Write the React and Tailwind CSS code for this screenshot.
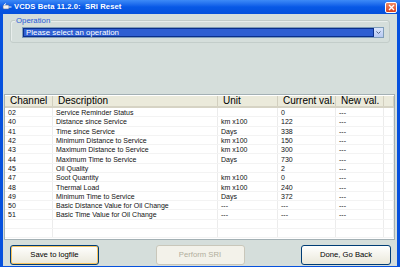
import React from "react";

const rows = [
  ["02", "Service Reminder Status", "", "0", "---"],
  ["40", "Distance since Service", "km x100", "122", "---"],
  ["41", "Time since Service", "Days", "338", "---"],
  ["42", "Minimum Distance to Service", "km x100", "150", "---"],
  ["43", "Maximum Distance to Service", "km x100", "300", "---"],
  ["44", "Maximum Time to Service", "Days", "730", "---"],
  ["45", "Oil Quality", "", "2", "---"],
  ["47", "Soot Quantity", "km x100", "0", "---"],
  ["48", "Thermal Load", "km x100", "240", "---"],
  ["49", "Minimum Time to Service", "Days", "372", "---"],
  ["50", "Basic Distance Value for Oil Change", "---", "---", "---"],
  ["51", "Basic Time Value for Oil Change", "---", "---", "---"],
  ["", "", "", "", ""],
  ["", "", "", "", ""],
];

const cols = ["w-[48px]", "w-[165px]", "w-[60px]", "w-[58px]", "w-[48px]", "flex-1"];
const heads = ["Channel", "Description", "Unit", "Current val.", "New val.", ""];

const App = () => {
  return (
    <div
      className="w-[400px] h-[267px] flex flex-col bg-[#0651de] overflow-hidden"
      style={{ fontFamily: '"Liberation Sans", Arial, sans-serif' }}
    >
      {/* title bar */}
      <div className="h-[14px] flex items-center pl-[2px] pr-[3px] bg-gradient-to-b from-[#3d8af7] via-[#0758e6] to-[#0550dc]">
        <svg width="10" height="8" viewBox="0 0 10 8" className="mr-[2px]">
          <rect x="1" y="2" width="6" height="4" rx="1" fill="#f2f2f2" stroke="#5a6a8a" strokeWidth="0.6" />
          <path d="M7 4 L9.5 4 M2 2 L4 0.5" stroke="#ffffff" strokeWidth="1" />
        </svg>
        <span className="text-[7.6px] font-bold text-white tracking-[0.1px] leading-none">
          VCDS Beta 11.2.0:&nbsp; SRI Reset
        </span>
        <div className="ml-auto w-[12px] h-[11px] rounded-[2px] border border-white bg-gradient-to-b from-[#f08a64] to-[#d9411c] flex items-center justify-center">
          <svg width="7" height="7" viewBox="0 0 7 7">
            <path d="M1 1 L6 6 M6 1 L1 6" stroke="#ffffff" strokeWidth="1.4" />
          </svg>
        </div>
      </div>

      {/* body */}
      <div className="flex-1 mx-[3px] mb-[1px] bg-[#d5dedb] flex flex-col">
        {/* operation group */}
        <div className="relative mt-[6px] mx-[7px] h-[23px] border border-[#c3cdca] rounded-[3px] shadow-[inset_1px_1px_0_#e8eeec]">
          <span className="absolute left-[4px] top-[-4px] px-[1px] bg-[#d5dedb] text-[7.8px] leading-none text-[#1f5ad8]">
            Operation
          </span>
          <div className="absolute left-[11px] top-[6px] w-[362px] h-[11px] flex border border-[#7f9db9] bg-white">
            <div className="flex-1 bg-[#2f5fd2] flex items-center pl-[2px] border border-[#0c2f8a]">
              <span className="text-[7.9px] leading-none text-white">Please select an operation</span>
            </div>
            <div className="w-[9px] bg-gradient-to-b from-[#dbe5fb] to-[#b6c8f2] flex items-center justify-center">
              <svg width="5" height="3" viewBox="0 0 5 3">
                <path d="M0.5 0.5 L2.5 2.5 L4.5 0.5" stroke="#4d6185" strokeWidth="1" fill="none" />
              </svg>
            </div>
          </div>
        </div>

        {/* table */}
        <div className="mt-[51px] ml-[1px] mr-[2px] h-[146px] border border-[#a3b0b4] bg-white pt-[1px] overflow-hidden">
          <div className="h-[12px] flex bg-[#ebeadb] border-b-[2px] border-[#d6d3c4]">
            {heads.map((h, i) => (
              <div
                key={i}
                className={`${cols[i]} h-full flex items-center pl-[5px] border-r border-[#d2cfbf] text-[10px] leading-none text-black whitespace-nowrap`}
              >
                {h}
              </div>
            ))}
          </div>
          {rows.map((r, ri) => (
            <div key={ri} className="h-[9.3px] flex border-b border-[#f3f3f3]">
              {[...r, ""].map((c, ci) => (
                <div
                  key={ci}
                  className={`${cols[ci]} h-full flex items-center pl-[3px] pt-[1px] border-r border-[#ececec] text-[7px] leading-none text-[#111111] whitespace-nowrap`}
                >
                  {c}
                </div>
              ))}
            </div>
          ))}
        </div>

        {/* buttons */}
        <div className="mt-[5px] flex justify-between pl-[7px] pr-[6px]">
          <button className="w-[89px] h-[20px] rounded-[3px] border border-[#003c74] bg-gradient-to-b from-[#fffffe] to-[#eae8da] shadow-[inset_0_0_0_1px_#f7c35e] text-[7.7px] text-black">
            Save to logfile
          </button>
          <button className="w-[89px] h-[20px] rounded-[3px] border border-[#c9c7ba] bg-[#f3f2ea] text-[7.7px] text-[#b1ae9c]">
            Perform SRI
          </button>
          <button className="w-[90px] h-[20px] rounded-[3px] border border-[#003c74] bg-gradient-to-b from-[#fffffe] to-[#eae8da] text-[7.7px] text-black">
            Done, Go Back
          </button>
        </div>
      </div>
    </div>
  );
};

export default App;
